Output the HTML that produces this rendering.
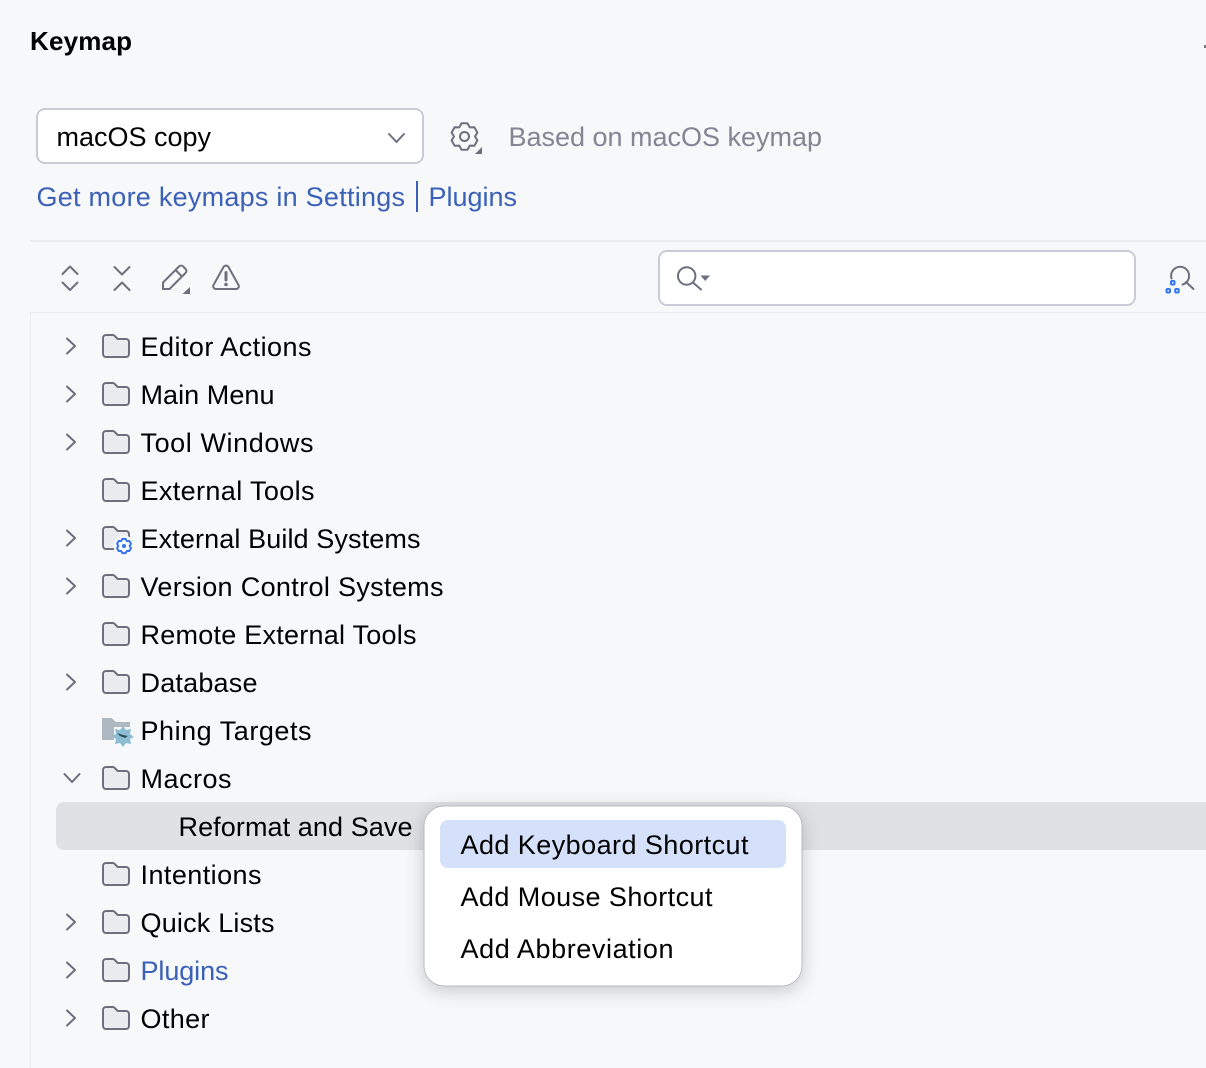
<!DOCTYPE html>
<html lang="en">
<head>
<meta charset="utf-8">
<title>Keymap</title>
<style>
html,body{margin:0;padding:0;width:1206px;height:1068px;overflow:hidden;background:#f7f8fa}
svg{display:block}
text{font-family:"Liberation Sans",Arial,sans-serif;font-size:27px;fill:#000}
.i{fill:none;stroke:#6c707e;stroke-width:2;stroke-linecap:round;stroke-linejoin:round}
.b{fill:none;stroke:#3574f0;stroke-width:2;stroke-linejoin:round}
.l{fill:#3a60b8}
</style>
</head>
<body>
<svg width="1206" height="1068" viewBox="0 0 1206 1068" xmlns="http://www.w3.org/2000/svg">
<defs>
<g id="fo"><path d="M1 4a3 3 0 0 1 3-3h6.500a3 3 0 0 1 2.200.9l3 3.100H24a3 3 0 0 1 3 3V20a3 3 0 0 1-3 3H4a3 3 0 0 1-3-3Z" fill="#ebecf0" stroke="#6c707e" stroke-width="2" stroke-linejoin="round"/></g>
<path id="ch" class="i" d="M-4-7.500 4 0-4 7.500"/>
<path id="gr" d="M3-13.200 5.250-9.100 9.900-9.200 12.900-3.900 10.500 0 12.900 3.900 9.900 9.200 5.250 9.100 3 13.200-3 13.200-5.250 9.100-9.900 9.200-12.900 3.900-10.500 0-12.900-3.900-9.900-9.200-5.250-9.100-3-13.200Z"/>
<filter id="sh" x="-15%" y="-20%" width="130%" height="145%"><feDropShadow dx="0" dy="4" stdDeviation="9" flood-color="#000" flood-opacity=".2"/></filter>
</defs>

<rect width="1206" height="1068" fill="#f7f8fa"/>
<rect x="1204" y="45" width="2" height="3" fill="#777"/>
<text x="30" y="50" style="font-weight:700;font-size:26px" textLength="102" lengthAdjust="spacing">Keymap</text>

<!-- keymap combo -->
<rect x="37" y="109" width="386" height="54" rx="8" fill="#fff" stroke="#c9ccd6" stroke-width="2"/>
<text x="56.500" y="146" textLength="154.500" lengthAdjust="spacing">macOS copy</text>
<path class="i" d="M389 134l7.500 8 7.500-8"/>

<!-- gear -->
<use href="#gr" transform="translate(464.500 136.500)" class="i"/>
<circle cx="464.500" cy="136.500" r="4.500" class="i"/>
<polygon points="482,147 482,154 475,154" fill="#6c707e"/>
<text x="508.500" y="146" style="fill:#818594" textLength="313.500" lengthAdjust="spacing">Based on macOS keymap</text>

<!-- links -->
<text x="36.500" y="206" class="l" textLength="368.500" lengthAdjust="spacing">Get more keymaps in Settings</text>
<rect x="416" y="181" width="2" height="31" fill="#3a60b8"/>
<text x="428.500" y="206" class="l" textLength="88.500" lengthAdjust="spacing">Plugins</text>

<!-- dividers -->
<rect x="30" y="240" width="1176" height="2" fill="#ebecf0"/>
<rect x="30" y="312" width="1176" height="1" fill="#ebecf0"/>
<rect x="30" y="312" width="1" height="756" fill="#ebecf0"/>

<!-- toolbar icons -->
<path class="i" d="M62.500 274 70 266.500 77.500 274M62.500 282.500 70 290 77.500 282.500"/>
<path class="i" d="M114.500 267 122 274.500 129.500 267M114.500 290 122 282.500 129.500 290"/>
<path class="i" d="M163 289V282.500L179 266.500a3 3 0 0 1 4.200 0l2.300 2.300a3 3 0 0 1 0 4.200L169.500 289ZM175.500 270l6.500 6.500"/>
<polygon points="190,287 190,294 182.500,294" fill="#6c707e"/>
<path class="i" d="M223.500 267 213.500 285a2.700 2.700 0 0 0 2.300 4H236.200a2.700 2.700 0 0 0 2.300-4L228.500 267a2.900 2.900 0 0 0-5 0Z"/>
<path d="M226 272.500V280" fill="none" stroke="#6c707e" stroke-width="3" stroke-linecap="round"/>
<circle cx="226" cy="284.500" r="1.800" fill="#6c707e"/>

<!-- search -->
<rect x="659" y="251" width="476" height="54" rx="8" fill="#fff" stroke="#c9ccd6" stroke-width="2"/>
<circle cx="686.700" cy="276" r="8.700" class="i"/>
<path class="i" d="M693.500 283 701 289.500"/>
<polygon points="700.500,275.500 710,275.500 705.200,281" fill="#6c707e"/>
<path class="i" d="M1171.500 278.500A9 9 0 1 1 1182.500 284.500M1186 282l7.500 7"/>
<rect x="1171" y="281" width="3.500" height="3.500" rx="1" class="b"/>
<rect x="1166.500" y="289" width="3.500" height="3.500" rx="1" class="b"/>
<rect x="1175.200" y="289" width="3.500" height="3.500" rx="1" class="b"/>

<!-- tree chevrons -->
<use href="#ch" x="71" y="346"/>
<use href="#ch" x="71" y="394"/>
<use href="#ch" x="71" y="442"/>
<use href="#ch" x="71" y="538"/>
<use href="#ch" x="71" y="586"/>
<use href="#ch" x="71" y="682"/>
<path class="i" d="M64.500 774 72 782 79.500 774"/>
<use href="#ch" x="71" y="922"/>
<use href="#ch" x="71" y="970"/>
<use href="#ch" x="71" y="1018"/>

<!-- selected row -->
<path d="M1206 802H64a8 8 0 0 0-8 8v32a8 8 0 0 0 8 8H1206Z" fill="#dfe1e5"/>

<!-- folders -->
<use href="#fo" x="102" y="334"/>
<use href="#fo" x="102" y="382"/>
<use href="#fo" x="102" y="430"/>
<use href="#fo" x="102" y="478"/>
<use href="#fo" x="102" y="526"/>
<circle cx="124" cy="546" r="10.500" fill="#f7f8fa"/>
<use href="#gr" transform="translate(124 546) scale(.54)" style="fill:none;stroke:#3574f0;stroke-width:3.600;stroke-linejoin:round"/>
<circle cx="124" cy="546" r="2" fill="#3574f0"/>
<use href="#fo" x="102" y="574"/>
<use href="#fo" x="102" y="622"/>
<use href="#fo" x="102" y="670"/>
<!-- phing -->
<path d="M102 718h9.500l4.500 4H130v5H114v13H102Z" fill="#afb8c1"/>
<polygon points="123,726 126,730 131,729 130,734 134,737 130,739 131,744 126,743 123,747 120,743 115,744 116,739 112,736 116,734 115,729 120,730" fill="#8dbdd2"/>
<path d="M117 733l6 2 5 1-3 2-5-2Z" fill="#2c4c5e"/>
<use href="#fo" x="102" y="766"/>
<use href="#fo" x="102" y="862"/>
<use href="#fo" x="102" y="910"/>
<use href="#fo" x="102" y="958"/>
<use href="#fo" x="102" y="1006"/>

<!-- tree labels -->
<text x="140.500" y="356" textLength="171" lengthAdjust="spacing">Editor Actions</text>
<text x="140.500" y="404" textLength="134" lengthAdjust="spacing">Main Menu</text>
<text x="140.500" y="452" textLength="173" lengthAdjust="spacing">Tool Windows</text>
<text x="140.500" y="500" textLength="174" lengthAdjust="spacing">External Tools</text>
<text x="140.500" y="548" textLength="280" lengthAdjust="spacing">External Build Systems</text>
<text x="140.500" y="596" textLength="303" lengthAdjust="spacing">Version Control Systems</text>
<text x="140.500" y="644" textLength="276" lengthAdjust="spacing">Remote External Tools</text>
<text x="140.500" y="692" textLength="117" lengthAdjust="spacing">Database</text>
<text x="140.500" y="740" textLength="171" lengthAdjust="spacing">Phing Targets</text>
<text x="140.500" y="788" textLength="91" lengthAdjust="spacing">Macros</text>
<text x="178.500" y="836" textLength="234" lengthAdjust="spacing">Reformat and Save</text>
<text x="140.500" y="884" textLength="121" lengthAdjust="spacing">Intentions</text>
<text x="140.500" y="932" textLength="134" lengthAdjust="spacing">Quick Lists</text>
<text x="140.500" y="980" style="fill:#3a60b8" textLength="88" lengthAdjust="spacing">Plugins</text>
<text x="140.500" y="1028" textLength="69" lengthAdjust="spacing">Other</text>

<!-- popup -->
<rect x="424" y="806" width="378" height="180" rx="20" fill="#fff" stroke="#b9bbc0" stroke-width="1" filter="url(#sh)"/>
<rect x="440" y="820" width="346" height="48" rx="8" fill="#d5e1fa"/>
<text x="460.500" y="854" textLength="288" lengthAdjust="spacing">Add Keyboard Shortcut</text>
<text x="460.500" y="906" textLength="252" lengthAdjust="spacing">Add Mouse Shortcut</text>
<text x="460.500" y="958" textLength="213" lengthAdjust="spacing">Add Abbreviation</text>
</svg>
</body>
</html>
